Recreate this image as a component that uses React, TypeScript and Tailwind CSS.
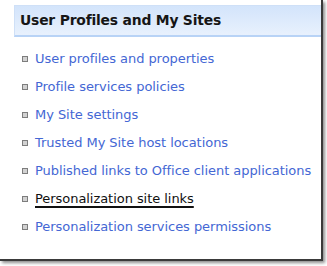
const links = [
  { label: 'User profiles and properties' },
  { label: 'Profile services policies' },
  { label: 'My Site settings' },
  { label: 'Trusted My Site host locations' },
  { label: 'Published links to Office client applications' },
  { label: 'Personalization site links', active: true },
  { label: 'Personalization services permissions' },
]

export default function App() {
  return (
    <div className="h-[266px] w-[327px] overflow-hidden bg-white">
      <div className="h-[261px] w-[323px] overflow-hidden border-b-2 border-r-2 border-[#3a3a3a] bg-white shadow-[2px_2px_3px_rgba(0,0,0,0.45)]">
        <section className="pl-[14px] pt-[5px] font-['Tahoma','DejaVu_Sans',sans-serif]">
          <div className="flex h-[32px] items-center border-l border-t border-[#cfe0f7] border-b-2 border-b-[#b8d3f6] bg-gradient-to-b from-[#d3e4fb] to-[#e8f1fd] pl-[5px]">
            <h2 className="text-[13.9px] font-bold tracking-[-0.2px] text-[#161616]">
              User Profiles and My Sites
            </h2>
          </div>
          <ul role="list" className="mt-[8px] flex flex-col">
            {links.map((link) => (
              <li key={link.label} className="flex h-[28px] items-center">
                <span className="ml-[8px] mr-[7px] block h-[6px] w-[6px] border border-[#7d7d7d] bg-[#d2d2d2]" />
                <a
                  href="#"
                  className={
                    link.active
                      ? 'text-[13px] tracking-[-0.05px] text-[#111] underline decoration-2 underline-offset-[3px]'
                      : 'text-[13px] tracking-[-0.05px] text-[#4467d4]'
                  }
                >
                  {link.label}
                </a>
              </li>
            ))}
          </ul>
        </section>
      </div>
    </div>
  )
}
